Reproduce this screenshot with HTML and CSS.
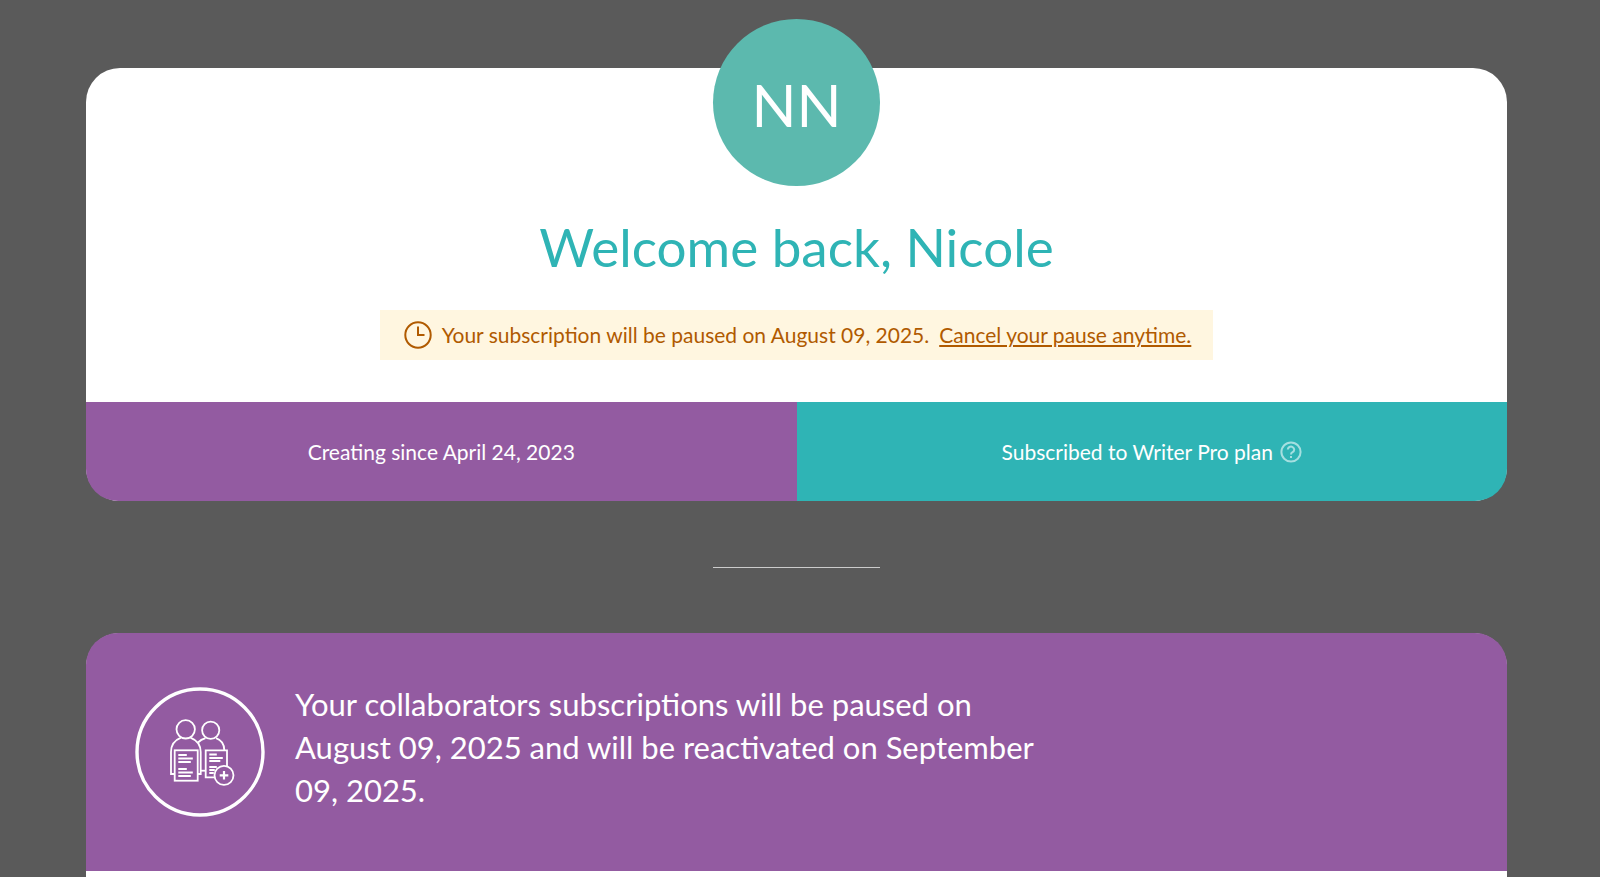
FILE: index.html
```html
<!DOCTYPE html>
<html lang="en">
<head>
    <meta charset="UTF-8">
    <meta name="viewport" content="width=device-width, initial-scale=1.0">
    <title>My Account</title>
    <link rel="stylesheet" href="styles.css">
</head>
<body>

    <main class="account">
        <section class="card profile">
            <div class="avatar">NN</div>
            <h1>Welcome back, Nicole</h1>

            <p class="pause-notice">
                <svg class="clock-icon" viewBox="0 0 28 28" aria-hidden="true">
                    <circle cx="14" cy="14" r="12.7"/>
                    <path d="M14 5.500v8.500h6.500"/>
                </svg>
                <span>Your subscription will be paused on August 09, 2025.</span>
                <a href="#">Cancel your pause anytime.</a>
            </p>

            <div class="profile-stats">
                <div class="stat since">Creating since April 24, 2023</div>
                <div class="stat plan">
                    Subscribed to Writer Pro plan
                    <button type="button" class="help" aria-label="About your plan">
                        <svg viewBox="0 0 22 22" aria-hidden="true">
                            <circle cx="11" cy="11" r="9.6"/>
                            <path d="M7.8 8.6a3.2 3 0 1 1 4.8 2.6c-1.1.6-1.6 1-1.6 2.2"/>
                            <path d="M11 15v2"/>
                        </svg>
                    </button>
                </div>
            </div>
        </section>

        <hr class="divider">

        <section class="card collaborators">
            <div class="collaborators-banner">
                <svg class="collaborators-icon" viewBox="0 0 130 130" aria-hidden="true">
                    <circle cx="65" cy="65" r="63" stroke-width="3.4"/>
                    <circle cx="50.7" cy="42.3" r="9.2"/>
                    <circle cx="75.7" cy="43.3" r="8.6"/>
                    <path d="M39.5 87H36V65c0-7 4-12 10-14.4M55.4 50.6C61.5 53 65.7 58 65.7 65v22h-3"/>
                    <path d="M63 55.5c2-2 4.5-3.4 7.5-4.3M81 51.2c5 1.8 8.3 6 8.3 12.1"/>
                    <path d="M65.7 83.7h5"/>
                    <rect x="39.7" y="63.3" width="23" height="30.4"/>
                    <path d="M43.3 68h8.5M43.3 71.5h14.5M43.3 75h12.5M43.3 82h8.5M43.3 85.5h14.5M43.3 89h12.5"/>
                    <path d="M79.7 90.3h-9v-27H92v16"/>
                    <path d="M74.3 67.5h7.5M74.3 71h13.5M74.3 74h11M74.3 80h7.5M74.3 83h5.5M74.3 86h4.5"/>
                    <circle cx="89" cy="88.3" r="9.5"/>
                    <path d="M89 84v8.6M84.7 88.3h8.6" stroke-width="2.2"/>
                </svg>
                <p>Your collaborators subscriptions will be paused on August 09, 2025 and will be reactivated on September 09, 2025.</p>
            </div>
        </section>
    </main>

</body>
</html>
```

FILE: styles.css
```css
* {
    box-sizing: border-box;
}
body {
    margin: 0;
    font-family: Lato, sans-serif;
    font-size: 21px;
    line-height: 30px;
    background-color: #5a5a5a;
    color: #fff;
}
.account {
    padding: 68px 93px 0 86px;
}
.card {
    background: #fff;
    border-radius: 34px;
}
.profile {
    display: flex;
    flex-direction: column;
    align-items: center;
}
.avatar {
    width: 167px;
    height: 167px;
    margin-top: -49px;
    border-radius: 50%;
    background: #5cb9ae;
    font-size: 59px;
    line-height: 172px;
    text-align: center;
}
h1 {
    margin: 29px 0 31px;
    color: #2fb4b5;
    font-size: 53px;
    font-weight: normal;
    line-height: 64px;
}
.pause-notice {
    display: flex;
    align-items: center;
    gap: 10px;
    margin: 0 0 42px;
    padding: 10px 22px 10px 24px;
    background: #fff6e0;
    color: #b05a00;
}
.pause-notice a {
    color: inherit;
    text-underline-offset: 2px;
}
.clock-icon {
    width: 28px;
    height: 28px;
    fill: none;
    stroke: currentColor;
    stroke-width: 2;
}
.profile-stats {
    display: flex;
    align-self: stretch;
}
.stat {
    display: flex;
    flex: 1;
    align-items: center;
    justify-content: center;
    gap: 7px;
    height: 99px;
}
.since {
    background: #935ba1;
    border-bottom-left-radius: 32px;
}
.plan {
    background: #2fb4b5;
    border-bottom-right-radius: 32px;
}
.help {
    display: flex;
    padding: 0;
    border: 0;
    background: none;
    color: #a5dfe0;
}
.help svg {
    width: 22px;
    height: 22px;
    fill: none;
    stroke: currentColor;
    stroke-width: 2;
}
.divider {
    width: 167px;
    height: 1px;
    margin: 66px auto 65px;
    border: 0;
    background: #ccc;
}
.collaborators {
    padding-bottom: 60px;
}
.collaborators-banner {
    display: flex;
    align-items: center;
    gap: 30px;
    padding: 50px 49px;
    background: #935ba1;
    border-radius: 32px 32px 0 0;
}
.collaborators-banner p {
    max-width: 740px;
    margin: 0;
    padding-bottom: 9px;
    font-size: 31px;
    line-height: 43px;
}
.collaborators-icon {
    flex: none;
    width: 130px;
    height: 130px;
    fill: none;
    stroke: #fff;
    stroke-width: 1.8;
}
```
